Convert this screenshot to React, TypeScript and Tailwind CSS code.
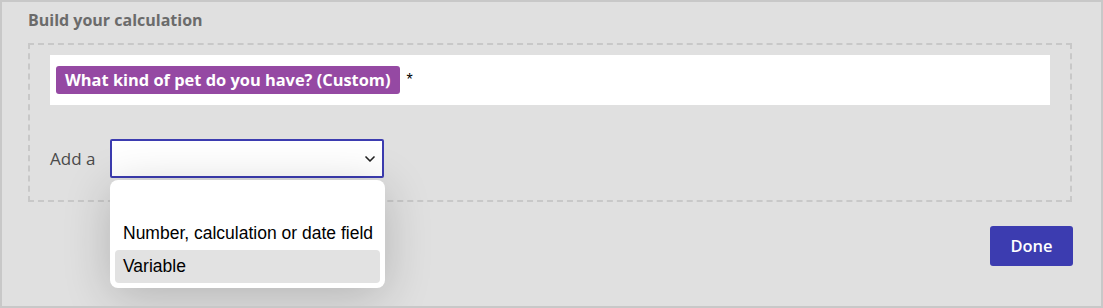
import { ChevronDown } from "lucide-react";

const OPTIONS = ["", "Number, calculation or date field", "Variable"];

export default function App() {
  return (
    <div className="w-[1103px] h-[308px] border-2 border-[#c8c8c8] bg-[#e0e0e0] font-['Open_Sans','Noto_Sans',sans-serif] overflow-hidden">
      <div className="pl-[26px] pt-[7px] w-[1070px]">
        <h2 className="text-[16px] leading-[22px] font-bold text-[#6b6b6b]">
          Build your calculation
        </h2>

        <div className="mt-[12px] border-2 border-dashed border-[#c8c8c8] h-[159px] pl-[20px] pt-[10px]">
          <div className="w-[1000px] h-[50px] bg-white flex items-center pl-[6px] gap-[7px]">
            <span className="bg-[#9549a3] text-white font-bold text-[16.4px] leading-[28px] px-[9px] rounded-[3px]">
              What kind of pet do you have? (Custom)
            </span>
            <span className="text-[16px] text-black font-['Liberation_Sans',Arial,sans-serif]">*</span>
          </div>

          <div className="mt-[34px] flex items-center">
            <span className="w-[60px] text-[17px] text-[#4a4a4a]">Add a</span>
            <div className="relative">
              <div className="w-[274px] h-[39px] border-2 border-[#3c3cb0] rounded-[2px] bg-white flex items-center justify-end pr-[4px]">
                <ChevronDown size={16} strokeWidth={2.5} className="text-[#222]" />
              </div>
              <ul className="absolute left-0 top-[41px] w-[275px] bg-white rounded-[8px] shadow-[0_8px_48px_rgba(0,0,0,0.2)] p-[5px] font-['Liberation_Sans',Arial,sans-serif] text-[17.5px] text-black z-10">
                {OPTIONS.map((o, i) => (
                  <li
                    key={i}
                    className={`leading-[33px] pl-[8px] rounded-[4px] whitespace-nowrap ${
                      o === "Variable" ? "bg-[#e2e2e2]" : ""
                    } ${i === 0 ? "h-[32px]" : "h-[33px]"}`}
                  >
                    {o}
                  </li>
                ))}
              </ul>
            </div>
          </div>
        </div>

        <div className="flex justify-end mt-[24px] -mr-[1px]">
          <button className="w-[83px] h-[40px] bg-[#3c3cb0] text-white text-[16.5px] font-semibold rounded-[3px]">
            Done
          </button>
        </div>
      </div>
    </div>
  );
}
